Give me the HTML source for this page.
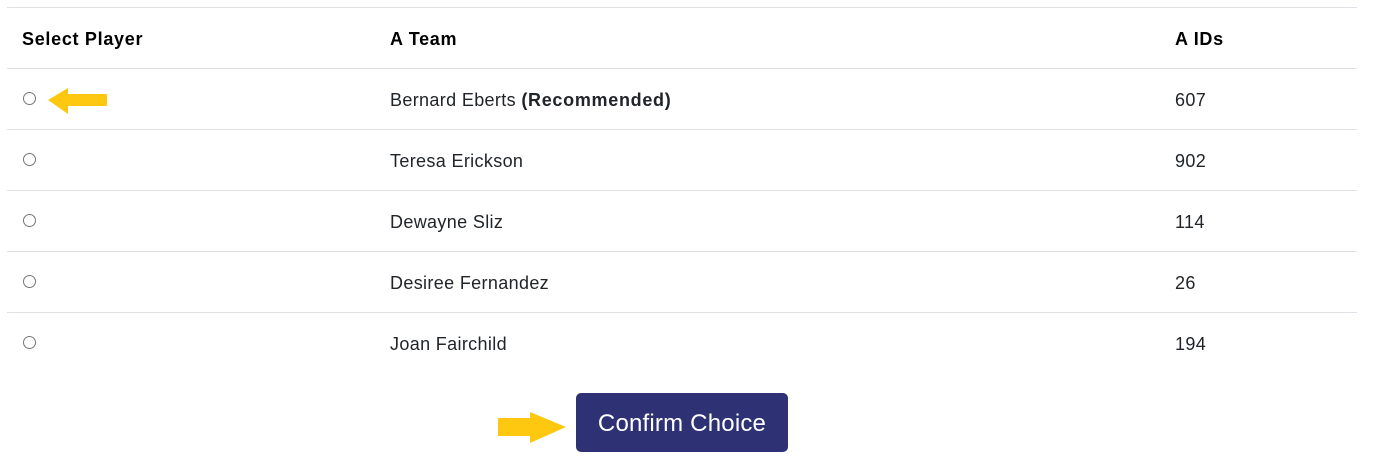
<!DOCTYPE html><html><head><style>
body{margin:0;width:1379px;height:466px;background:#fff;font-family:"Liberation Sans",sans-serif;color:#212529;position:relative;overflow:hidden}
.l{position:absolute;left:7px;width:1350px;height:1px;background:#dee2e6}
.t{position:absolute;font-size:18px;line-height:20px;letter-spacing:0.35px}
.t b{letter-spacing:0.7px}
.h{font-weight:bold;color:#000;font-size:18px;letter-spacing:0.7px}
.r{position:absolute;left:23px;width:13px;height:13px;border:1px solid #767676;border-radius:50%;box-sizing:border-box}
.btn{position:absolute;left:576px;top:393px;width:212px;height:59px;background:#2e3174;border-radius:5px;color:#fff;font-size:24px;line-height:61px;text-align:center;letter-spacing:0.2px}
</style></head><body>
<div class="l" style="top:7px"></div>
<div class="l" style="top:68px"></div>
<div class="l" style="top:129px"></div>
<div class="l" style="top:190px"></div>
<div class="l" style="top:251px"></div>
<div class="l" style="top:312px"></div>
<div class="t h" style="left:22px;top:29px">Select Player</div>
<div class="t h" style="left:390px;top:29px">A Team</div>
<div class="t h" style="left:1175px;top:29px">A IDs</div>

<div class="r" style="top:92px"></div>
<svg style="position:absolute;left:46px;top:86px" width="64" height="32"><polygon points="2,14 22,2 22,8 61,8 61,20 22,20 22,28" fill="#fdc80f"/></svg>
<div class="t" style="left:390px;top:90px">Bernard Eberts <b>(Recommended)</b></div>
<div class="t" style="left:1175px;top:90px">607</div>

<div class="r" style="top:153px"></div>
<div class="t" style="left:390px;top:151px">Teresa Erickson</div>
<div class="t" style="left:1175px;top:151px">902</div>

<div class="r" style="top:214px"></div>
<div class="t" style="left:390px;top:212px">Dewayne Sliz</div>
<div class="t" style="left:1175px;top:212px">114</div>

<div class="r" style="top:275px"></div>
<div class="t" style="left:390px;top:273px">Desiree Fernandez</div>
<div class="t" style="left:1175px;top:273px">26</div>

<div class="r" style="top:336px"></div>
<div class="t" style="left:390px;top:334px">Joan Fairchild</div>
<div class="t" style="left:1175px;top:334px">194</div>

<svg style="position:absolute;left:496px;top:409px" width="74" height="37"><polygon points="2,9 34,9 34,3 70,18 34,34 34,27 2,27" fill="#fdc80f"/></svg>
<div class="btn">Confirm Choice</div>
</body></html>
